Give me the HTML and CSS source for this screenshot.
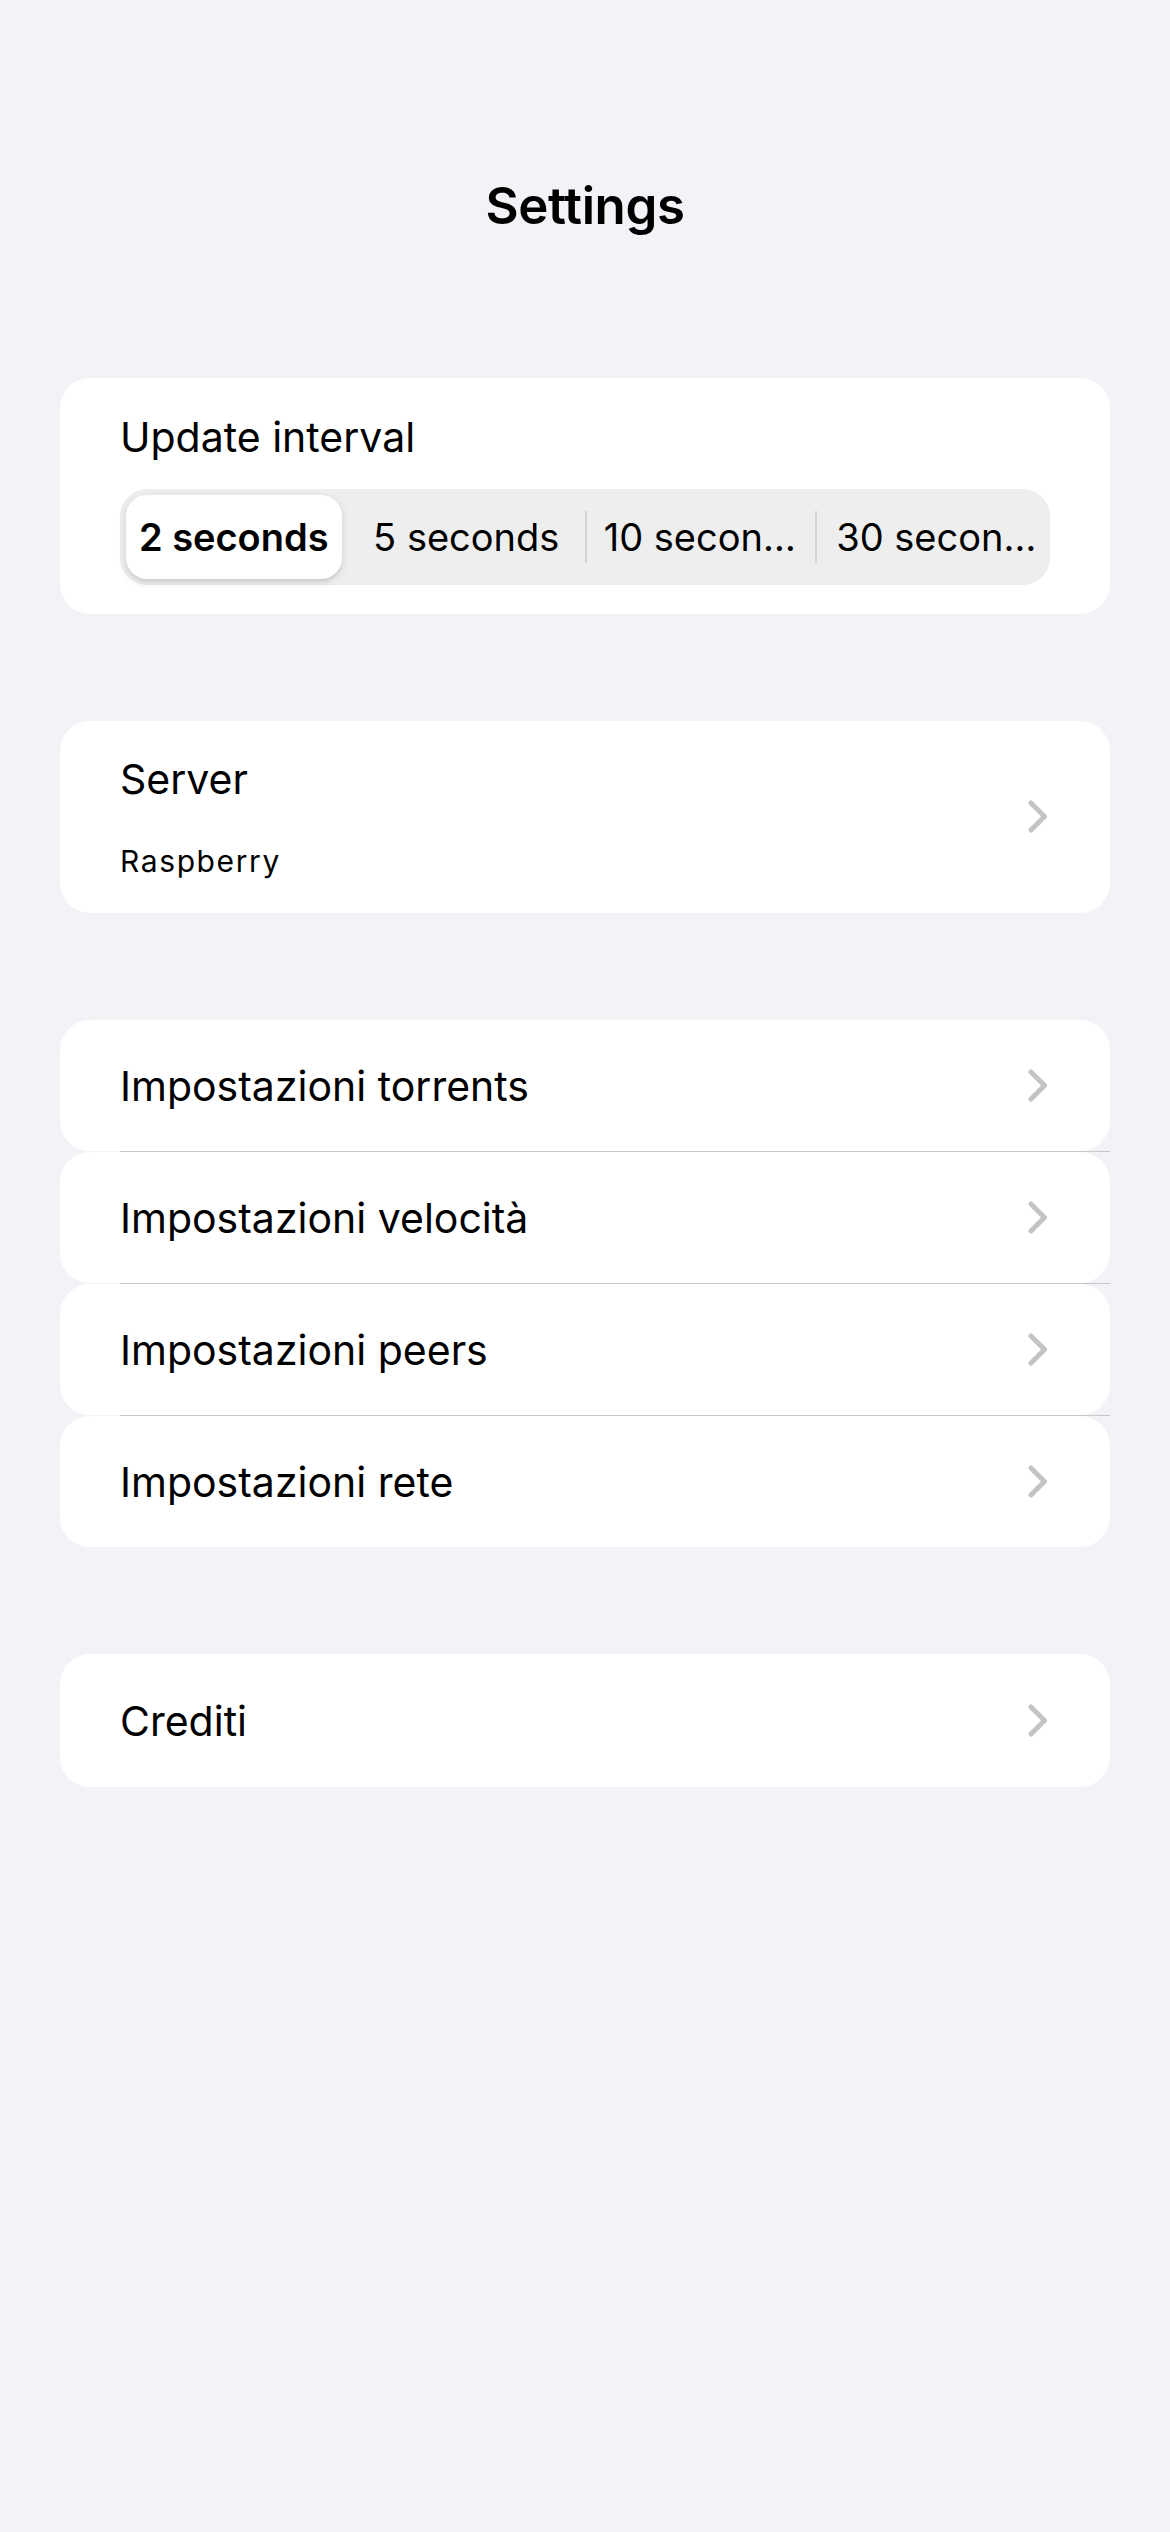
FILE: index.html
```html
<!DOCTYPE html>
<html lang="it">
<head>
<meta charset="utf-8">
<title>Settings</title>
<link rel="stylesheet" href="styles.css">
</head>
<body>
<div class="screen">
  <header class="nav">
    <h1 class="nav-title">Settings</h1>
  </header>
  <main class="content">
    <section class="card card-interval">
      <div class="label">Update interval</div>
      <div class="segmented">
        <div class="seg seg-selected"><span>2 seconds</span></div>
        <div class="seg seg-second"><span>5 seconds</span></div>
        <div class="seg seg-div"><span>10 secon…</span></div>
        <div class="seg seg-div seg-last"><span>30 secon…</span></div>
      </div>
    </section>

    <section class="card card-server">
      <div class="server-text">
        <div class="label">Server</div>
        <div class="sublabel">Raspberry</div>
      </div>
      <svg class="chev" width="20" height="33" viewBox="0 0 20 33"><path d="M3 3 L16.5 16.5 L3 30" fill="none" stroke="#c4c4c7" stroke-width="5" stroke-linecap="round" stroke-linejoin="round"/></svg>
    </section>

    <section class="group">
      <div class="row"><span class="label">Impostazioni torrents</span><svg class="chev" width="20" height="33" viewBox="0 0 20 33"><path d="M3 3 L16.5 16.5 L3 30" fill="none" stroke="#c4c4c7" stroke-width="5" stroke-linecap="round" stroke-linejoin="round"/></svg></div>
      <div class="sep"></div>
      <div class="row"><span class="label">Impostazioni velocità</span><svg class="chev" width="20" height="33" viewBox="0 0 20 33"><path d="M3 3 L16.5 16.5 L3 30" fill="none" stroke="#c4c4c7" stroke-width="5" stroke-linecap="round" stroke-linejoin="round"/></svg></div>
      <div class="sep"></div>
      <div class="row"><span class="label">Impostazioni peers</span><svg class="chev" width="20" height="33" viewBox="0 0 20 33"><path d="M3 3 L16.5 16.5 L3 30" fill="none" stroke="#c4c4c7" stroke-width="5" stroke-linecap="round" stroke-linejoin="round"/></svg></div>
      <div class="sep"></div>
      <div class="row"><span class="label">Impostazioni rete</span><svg class="chev" width="20" height="33" viewBox="0 0 20 33"><path d="M3 3 L16.5 16.5 L3 30" fill="none" stroke="#c4c4c7" stroke-width="5" stroke-linecap="round" stroke-linejoin="round"/></svg></div>
    </section>

    <section class="row row-single">
      <span class="label">Crediti</span>
      <svg class="chev" width="20" height="33" viewBox="0 0 20 33"><path d="M3 3 L16.5 16.5 L3 30" fill="none" stroke="#c4c4c7" stroke-width="5" stroke-linecap="round" stroke-linejoin="round"/></svg>
    </section>
  </main>
</div>
</body>
</html>
```

FILE: styles.css
```css
* { box-sizing: border-box; }

html, body {
  margin: 0;
  padding: 0;
}

body {
  background: #f2f2f7;
  font-family: Inter, "Noto Sans", "Liberation Sans", sans-serif;
  color: #000;
  min-height: 2532px;
}

.nav {
  padding-top: 175px;
}

.nav-title {
  margin: 0;
  font-size: 51px;
  font-weight: 600;
  line-height: 62px;
  text-align: center;
  letter-spacing: -0.4px;
}

.content {
  display: flex;
  flex-direction: column;
  gap: 107px;
  padding: 141px 60px 0;
}

.card {
  background: #fff;
  border-radius: 30px;
}

.label {
  font-size: 41px;
  line-height: 50px;
  letter-spacing: 0;
}

.card-interval {
  padding: 34px 60px 29px;
}

.card-interval .label {
  margin-bottom: 27px;
}

.segmented {
  display: grid;
  grid-template-columns: repeat(4, 1fr);
  height: 96px;
  padding: 6px;
  background: #eeeeef;
  border-radius: 27px;
}

.seg {
  display: flex;
  align-items: center;
  justify-content: center;
  min-width: 0;
  padding: 0 8px;
  font-size: 38px;
  line-height: 46px;
  white-space: nowrap;
}

.seg-selected {
  background: #fff;
  border-radius: 21px;
  margin-right: 14px;
  padding: 0 4px;
  font-weight: 600;
  box-shadow: 0 3px 8px rgba(0, 0, 0, 0.12), 0 3px 1px rgba(0, 0, 0, 0.04);
}

.seg-second {
  padding-right: 16px;
}

.seg-div {
  background: linear-gradient(#d4d4d8, #d4d4d8) left center / 2px 52px no-repeat;
}

.seg-last {
  padding-left: 14px;
  padding-right: 0;
}

.card-server {
  display: flex;
  align-items: center;
  padding: 33px 62px 34px 60px;
}

.server-text {
  flex: 1;
}

.sublabel {
  margin-top: 39px;
  font-size: 30px;
  line-height: 36px;
  letter-spacing: 1.6px;
}

.chev {
  flex-shrink: 0;
  margin-left: auto;
  display: block;
}

.group {
  display: flex;
  flex-direction: column;
}

.row {
  display: flex;
  align-items: center;
  height: 131px;
  padding: 0 62px 0 60px;
  background: #fff;
  border-radius: 30px;
}

.row-single {
  height: 133px;
}

.sep {
  height: 1px;
  margin-left: 60px;
  background: #c8c8cc;
}
```
